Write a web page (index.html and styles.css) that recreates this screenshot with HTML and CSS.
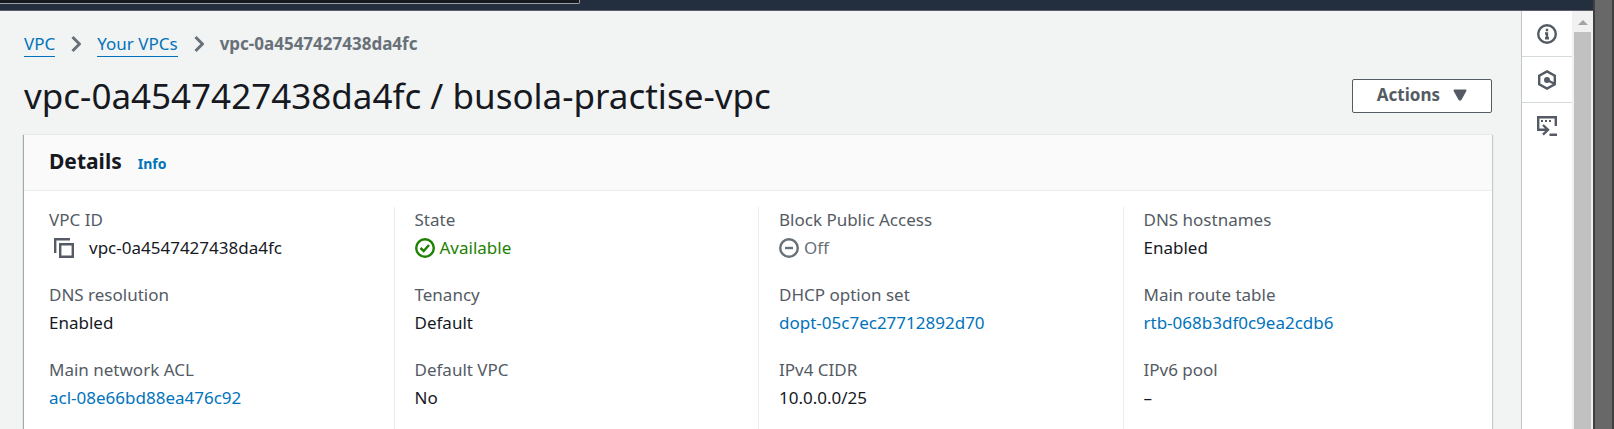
FILE: index.html
```html
<!DOCTYPE html>
<html lang="en">
<head>
<meta charset="utf-8">
<title>VPC details</title>
<link rel="stylesheet" href="styles.css">
</head>
<body>
<div class="window">
  <div class="console">
    <header class="topbar"><div class="search-edge"></div></header>
    <div class="workspace">
      <main class="content">
        <nav class="breadcrumbs" aria-label="Breadcrumbs">
          <a href="#">VPC</a>
          <svg class="chevron" viewBox="0 0 10 18" aria-hidden="true"><path d="M1.500 2l7 7-7 7"/></svg>
          <a href="#">Your VPCs</a>
          <svg class="chevron" viewBox="0 0 10 18" aria-hidden="true"><path d="M1.500 2l7 7-7 7"/></svg>
          <span class="current">vpc-0a4547427438da4fc</span>
        </nav>
        <div class="title-row">
          <h1>vpc-0a4547427438da4fc / busola-practise-vpc</h1>
          <button class="actions" type="button">Actions
            <svg viewBox="0 0 14 12" aria-hidden="true"><path d="M1.500 1.500h11L7.500 10.500h-1z"/></svg>
          </button>
        </div>
        <section class="card">
          <div class="card-header"><h2>Details</h2><a href="#">Info</a></div>
          <div class="columns">
            <dl>
              <div><dt>VPC ID</dt><dd class="copyable"><button type="button" aria-label="Copy VPC ID"><svg class="icon" viewBox="0 0 20 20"><path d="M1.200 15V1.200H16M6.200 6.200h12.600v12.600H6.200z"/></svg></button>vpc-0a4547427438da4fc</dd></div>
              <div><dt>DNS resolution</dt><dd>Enabled</dd></div>
              <div><dt>Main network ACL</dt><dd><a href="#">acl-08e66bd88ea476c92</a></dd></div>
            </dl>
            <dl>
              <div><dt>State</dt><dd class="status available"><svg class="icon" viewBox="0 0 20 20" aria-hidden="true"><circle cx="10" cy="10" r="8.800"/><path d="M5.500 10l3.200 3 5.300-6"/></svg>Available</dd></div>
              <div><dt>Tenancy</dt><dd>Default</dd></div>
              <div><dt>Default VPC</dt><dd>No</dd></div>
            </dl>
            <dl>
              <div><dt>Block Public Access</dt><dd class="status off"><svg class="icon" viewBox="0 0 20 20" aria-hidden="true"><circle cx="10" cy="10" r="8.800"/><path d="M6 10h8"/></svg>Off</dd></div>
              <div><dt>DHCP option set</dt><dd><a href="#">dopt-05c7ec27712892d70</a></dd></div>
              <div><dt>IPv4 CIDR</dt><dd>10.0.0.0/25</dd></div>
            </dl>
            <dl>
              <div><dt>DNS hostnames</dt><dd>Enabled</dd></div>
              <div><dt>Main route table</dt><dd><a href="#">rtb-068b3df0c9ea2cdb6</a></dd></div>
              <div><dt>IPv6 pool</dt><dd>–</dd></div>
            </dl>
          </div>
        </section>
      </main>
      <aside class="rail">
        <button type="button" aria-label="Info"><svg class="icon" viewBox="0 0 20 20"><circle cx="10" cy="10" r="8.800"/><path d="M10 4.800v2.400M8 9.500h2V15M8 14.200h4"/></svg></button>
        <button type="button" aria-label="Diagnostics"><svg class="icon" viewBox="0 0 20 20"><path d="M10 1.400l7.800 4.400v8.400L10 18.600l-7.800-4.400V5.800zM10 10l7.500 3.800"/><circle class="solid" cx="10" cy="10" r="1.800"/></svg></button>
        <button type="button" aria-label="CloudShell"><svg class="icon" viewBox="0 0 20 20"><path d="M18.800 10V1.200H1.200v12.600H10M6 9l5 4.800-5 4.800M12.500 18.800H20"/><path class="dots" d="M4 5h2M8 5h2M12 5h2"/></svg></button>
      </aside>
      <div class="scrollbar" aria-hidden="true">
        <svg viewBox="0 0 10 5"><path d="M0 5l5-5 5 5z"/></svg>
        <div class="thumb"></div>
      </div>
    </div>
  </div>
  <div class="window-edge"></div>
</div>
</body>
</html>
```
FILE: styles.css
```css
* { box-sizing: border-box; }
body {
  margin: 0;
  font: 17px/28px "Noto Sans", "Open Sans", sans-serif;
  color: #16191f;
  background: #f2f3f3;
}
h1, h2, dl, dd { margin: 0; }
a { color: #0073bb; text-decoration: none; }
button { font: inherit; color: #545b64; cursor: pointer; }

.window { display: flex; height: 100vh; overflow: hidden; }
.console { flex: 1; min-width: 0; display: flex; flex-direction: column; }
.window-edge {
  width: 21px;
  background: #686868;
  border: solid #404040;
  border-width: 0 2px;
}

.topbar {
  flex: none;
  height: 11px;
  background: #232f3e;
  border-bottom: 1px solid #5b5d68;
}
.search-edge {
  width: 36.400%;
  height: 4px;
  background: #16191f;
  border: solid #9ba0a3;
  border-width: 0 1px 1px 0;
  border-bottom-right-radius: 2px;
}
.workspace { flex: 1; min-height: 0; display: flex; }
.content { flex: 1; min-width: 0; padding: 19px 29px 0 24px; overflow: hidden; }

.breadcrumbs { display: flex; align-items: center; gap: 16px; height: 28px; }
.breadcrumbs a { line-height: 24px; border-bottom: 1px solid #0073bb; }
.current { font-weight: 700; color: #687078; }
.chevron {
  width: 10px;
  height: 18px;
  fill: none;
  stroke: #687078;
  stroke-width: 3;
}

.title-row {
  display: flex;
  align-items: center;
  justify-content: space-between;
  height: 48px;
  margin: 14px 0;
}
h1 { font-size: 35px; line-height: 48px; font-weight: 400; }
.actions {
  display: flex;
  align-items: center;
  gap: 13px;
  height: 34px;
  padding: 0 24px 2px;
  font-weight: 700;
  background: #fff;
  border: 1px solid #545b64;
  border-radius: 2px;
}
.actions svg {
  width: 14px;
  height: 12px;
  fill: #545b64;
  stroke: #545b64;
  stroke-width: 2;
  stroke-linejoin: round;
}

.card {
  min-height: 400px;
  background: #fff;
  border-top: 1px solid #e4e9e9;
  box-shadow: 0 1px 1px rgba(0, 28, 36, .3), 1px 1px 1px rgba(0, 28, 36, .15), -1px 1px 1px rgba(0, 28, 36, .3);
}
.card-header {
  display: flex;
  align-items: baseline;
  gap: 16px;
  padding: 12px 25px;
  background: #fafafa;
  border-bottom: 1px solid #eaeded;
}
h2 { font-size: 21px; line-height: 28px; font-weight: 700; }
.card-header a { font-size: 14px; font-weight: 700; }

.columns {
  display: grid;
  grid-template-columns: repeat(4, 1fr);
  padding: 16px 5px 0;
}
dl {
  display: flex;
  flex-direction: column;
  gap: 19px;
  min-height: 300px;
  padding: 0 20px;
}
dl + dl { border-left: 1px solid #eaeded; }
dt { line-height: 26px; color: #545b64; }
dd { line-height: 30px; white-space: nowrap; }
.copyable, .status { display: flex; align-items: center; }
.copyable { gap: 10px; }
.copyable button { display: flex; padding: 5px; border: 0; background: none; }
.status { gap: 5px; }
.available { color: #1d8102; }
.off { color: #687078; }
.icon {
  flex: none;
  width: 20px;
  height: 20px;
  fill: none;
  stroke: currentColor;
  stroke-width: 2.400;
}
.solid { fill: currentColor; }
.dots { stroke-width: 2; }

.rail {
  flex: none;
  width: 51px;
  background: #fff;
  border-left: 1px solid #c3c8c9;
}
.rail button {
  display: flex;
  align-items: center;
  justify-content: center;
  width: 100%;
  height: 46px;
  padding: 0;
  background: none;
  border: 0;
  border-bottom: 1px solid #d5dbdb;
}
.rail button:last-child { border-bottom: 0; }

.scrollbar {
  flex: none;
  display: flex;
  flex-direction: column;
  align-items: center;
  gap: 7px;
  width: 21px;
  padding-top: 9px;
  background: #f1f1f1;
}
.scrollbar svg { width: 10px; height: 5px; fill: #a3a3a3; }
.thumb { flex: 1; width: 17px; background: #c1c1c1; }
```
